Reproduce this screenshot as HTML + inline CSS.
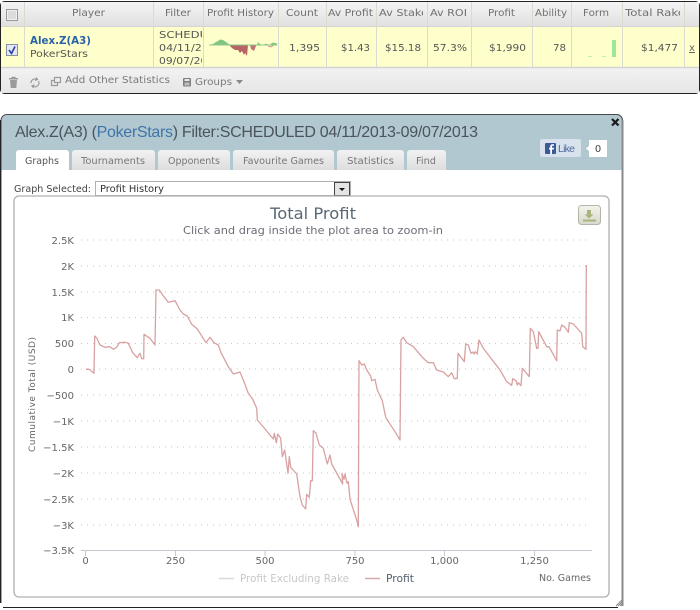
<!DOCTYPE html>
<html>
<head>
<meta charset="utf-8">
<title>Alex.Z(A3)</title>
<style>
html,body{margin:0;padding:0;background:#fff;width:700px;height:610px;overflow:hidden}
svg{display:block;filter:blur(0.35px)}
text{font-family:"DejaVu Sans","Liberation Sans",sans-serif;white-space:pre}
.h{font-size:10px;fill:#707070}
.v{font-size:10px;fill:#555}
.tab{font-size:10px;fill:#777}
.y{font-size:10px;fill:#666;text-anchor:end}
.x{font-size:10px;fill:#666;text-anchor:middle}
.g{stroke:#c4c4c4;stroke-width:1;stroke-dasharray:1 5}
</style>
</head>
<body>
<svg width="700" height="610" viewBox="0 0 700 610" xmlns="http://www.w3.org/2000/svg">
<defs>
<linearGradient id="hd" x1="0" y1="0" x2="0" y2="1"><stop offset="0" stop-color="#f4f4f4"/><stop offset="1" stop-color="#e0e0e0"/></linearGradient>
<linearGradient id="ft" x1="0" y1="0" x2="0" y2="1"><stop offset="0" stop-color="#f2f2f2"/><stop offset="1" stop-color="#e6e6e6"/></linearGradient>
<linearGradient id="tb" x1="0" y1="0" x2="0" y2="1"><stop offset="0" stop-color="#f2f2f2"/><stop offset="1" stop-color="#dedede"/></linearGradient>
<linearGradient id="dl" x1="0" y1="0" x2="0" y2="1"><stop offset="0" stop-color="#f4f4ee"/><stop offset="1" stop-color="#d8d8cc"/></linearGradient>
<clipPath id="c1"><rect x="155" y="27" width="47" height="40"/></clipPath>
<clipPath id="c2"><rect x="378" y="2" width="45" height="24"/></clipPath>
<clipPath id="c3"><rect x="624" y="2" width="56" height="24"/></clipPath>
</defs>

<!-- top table panel -->
<rect x="0.5" y="1.5" width="699" height="92" rx="4" fill="#efefef" stroke="#222"/>
<rect x="1" y="2" width="698" height="24" fill="url(#hd)"/>
<rect x="1" y="27" width="698" height="40" fill="#ffffcc"/>
<rect x="1" y="68" width="698" height="25" fill="url(#ft)"/>
<line x1="1" y1="26.5" x2="699" y2="26.5" stroke="#d4d4d4"/>
<line x1="1" y1="67.5" x2="699" y2="67.5" stroke="#d4d4d4" stroke-width="1.5"/>
<g stroke="#dadad0" stroke-width="1">
<line x1="24.5" y1="2" x2="24.5" y2="67"/><line x1="153.5" y1="2" x2="153.5" y2="67"/><line x1="203.5" y1="2" x2="203.5" y2="67"/>
<line x1="278.5" y1="2" x2="278.5" y2="67"/><line x1="326.5" y1="2" x2="326.5" y2="67"/><line x1="376.5" y1="2" x2="376.5" y2="67"/>
<line x1="427.5" y1="2" x2="427.5" y2="67"/><line x1="471.5" y1="2" x2="471.5" y2="67"/><line x1="532.5" y1="2" x2="532.5" y2="67"/>
<line x1="571.5" y1="2" x2="571.5" y2="67"/><line x1="622.5" y1="2" x2="622.5" y2="67"/><line x1="684.5" y1="2" x2="684.5" y2="67"/>
</g>
<rect x="6.5" y="9.5" width="11" height="11" fill="#eee" stroke="#999"/>
<rect x="8" y="11" width="8" height="8" fill="#dcdcdc"/>
<rect x="6.5" y="44.5" width="11" height="11" fill="#e6e8f0" stroke="#8390a8"/>
<path d="M9 50 L11.500 53.500 L15 46.500" fill="none" stroke="#2a3fb0" stroke-width="1.600"/>

<text class="h" x="72" y="16" textLength="33" lengthAdjust="spacingAndGlyphs">Player</text>
<text class="h" x="165" y="16" textLength="26" lengthAdjust="spacingAndGlyphs">Filter</text>
<text class="h" x="207" y="16" textLength="67" lengthAdjust="spacingAndGlyphs">Profit History</text>
<text class="h" x="286" y="16" textLength="32" lengthAdjust="spacingAndGlyphs">Count</text>
<text class="h" x="328" y="16" textLength="45" lengthAdjust="spacingAndGlyphs">Av Profit</text>
<g clip-path="url(#c2)"><text class="h" x="379" y="16" textLength="49" lengthAdjust="spacingAndGlyphs">Av Stake</text></g>
<text class="h" x="430" y="16" textLength="37" lengthAdjust="spacingAndGlyphs">Av ROI</text>
<text class="h" x="488" y="16" textLength="27" lengthAdjust="spacingAndGlyphs">Profit</text>
<text class="h" x="535" y="16" textLength="32" lengthAdjust="spacingAndGlyphs">Ability</text>
<text class="h" x="583" y="16" textLength="26" lengthAdjust="spacingAndGlyphs">Form</text>
<g clip-path="url(#c3)"><text class="h" x="625" y="16" textLength="60" lengthAdjust="spacingAndGlyphs">Total Rake</text></g>

<text x="30" y="44" font-size="10.5px" font-weight="bold" fill="#2a62a8" textLength="61" lengthAdjust="spacingAndGlyphs">Alex.Z(A3)</text>
<text class="v" x="30" y="57" textLength="58" lengthAdjust="spacingAndGlyphs">PokerStars</text>
<g clip-path="url(#c1)">
<text class="v" x="159" y="38" textLength="72" lengthAdjust="spacingAndGlyphs">SCHEDULED</text>
<text class="v" x="159" y="51" textLength="68" lengthAdjust="spacingAndGlyphs">04/11/2013-</text>
<text class="v" x="159" y="64" textLength="62" lengthAdjust="spacingAndGlyphs">09/07/2013</text>
</g>
<!-- sparkline -->
<polygon points="209,45 213,44 216,42 218,41 220,39.500 223,40 226,42 230,45" fill="#7fc77f"/>
<polygon points="229,45 232,48 235,50 238,50 240,53 242,51 244,55 245,53 247,56 248,45" fill="#b86464"/>
<polygon points="250,45 251,49 254,51 256,46 257,45" fill="#c27272"/>
<polygon points="257,45 258,42 260,44 263,45 266,43.500 269,45 273,42.500 277,43.500 277,45" fill="#7fc77f"/>
<line x1="209" y1="45" x2="277" y2="45" stroke="#8cc78c" stroke-width="1"/>
<path d="M268 46 L271 47 L273 45.500" stroke="#d09090" fill="none"/>

<text class="v" x="320" y="51" text-anchor="end" textLength="31" lengthAdjust="spacingAndGlyphs">1,395</text>
<text class="v" x="370" y="51" text-anchor="end" textLength="29" lengthAdjust="spacingAndGlyphs">$1.43</text>
<text class="v" x="421" y="51" text-anchor="end" textLength="36" lengthAdjust="spacingAndGlyphs">$15.18</text>
<text class="v" x="467" y="51" text-anchor="end" textLength="34" lengthAdjust="spacingAndGlyphs">57.3%</text>
<text class="v" x="526" y="51" text-anchor="end" textLength="37" lengthAdjust="spacingAndGlyphs">$1,990</text>
<text class="v" x="566" y="51" text-anchor="end" textLength="13" lengthAdjust="spacingAndGlyphs">78</text>
<text class="v" x="678" y="51" text-anchor="end" textLength="37" lengthAdjust="spacingAndGlyphs">$1,477</text>
<rect x="612" y="40" width="4" height="17" fill="#9be89b"/>
<rect x="588" y="56" width="4" height="1" fill="#bfeebf"/>
<rect x="602" y="56" width="4" height="1" fill="#bfeebf"/>
<text x="692" y="51" font-size="10px" fill="#666" text-anchor="middle" text-decoration="underline">x</text>

<!-- footer icons -->
<g fill="#9a9a9a">
<rect x="9" y="78" width="9" height="1.500"/><rect x="11.500" y="76.800" width="4" height="1.500"/>
<path d="M10 80 H17 L16.300 88 H10.700 Z"/>
</g>
<g fill="none" stroke="#9a9a9a" stroke-width="1.200">
<path d="M31 83 A4 4 0 0 1 37 79.500"/><path d="M38.500 81 A4 4 0 0 1 32.500 86"/>
<path d="M36 77.500 L37.500 79.500 L35 80.500"/><path d="M33.500 87.800 L32 85.800 L34.500 85"/>
<rect x="54.500" y="77.500" width="6" height="5"/><path d="M54 80.500 H51.500 V85.500 H57.500 V83"/>
</g>
<text x="65" y="83" font-size="10px" fill="#7a7a7a" textLength="105" lengthAdjust="spacingAndGlyphs">Add Other Statistics</text>
<rect x="183" y="78" width="8" height="8.500" rx="1" fill="#7f7f7f"/>
<rect x="184.500" y="79" width="5" height="2" fill="#e8e8e8"/><rect x="184.500" y="82.500" width="5" height="3" fill="#bdbdbd"/>
<text x="195" y="85" font-size="10px" fill="#7a7a7a" textLength="37" lengthAdjust="spacingAndGlyphs">Groups</text>
<path d="M236 80 H243 L239.500 84 Z" fill="#888"/>

<!-- dialog -->
<rect x="1" y="114" width="622" height="493" rx="6" fill="#fff"/>
<path d="M7 114 H617 A6 6 0 0 1 623 120 V170 H1 V120 A6 6 0 0 1 7 114 Z" fill="#b2c8d1"/>
<path d="M622.500 120 V606" stroke="#8a8a8a" stroke-width="2" fill="none"/>
<path d="M622.500 120 A6 6 0 0 0 616.500 114.500 H7 A6 6 0 0 0 1 120.500 V603" stroke="#4a4a4a" stroke-width="1" fill="none"/>
<path d="M0.500 120 V603" stroke="#222" stroke-width="1" fill="none"/>
<path d="M3 607.500 H618" stroke="#222" stroke-width="1" fill="none"/>
<g stroke="#888" stroke-width="1"><line x1="616" y1="606" x2="622" y2="600"/><line x1="618" y1="606" x2="622" y2="602"/><line x1="620" y1="606" x2="622" y2="604"/></g>

<text x="15" y="137" font-size="16px" fill="#4a545a" style="font-family:'Liberation Sans',sans-serif" textLength="463"><tspan>Alex.Z(A3) (</tspan><tspan fill="#3f74a8">PokerStars</tspan><tspan>) Filter:SCHEDULED 04/11/2013-09/07/2013</tspan></text>
<path d="M612 119 L618.500 125.500 M618.500 119 L612 125.500" stroke="#1a1a1a" stroke-width="2.200"/>

<!-- tabs -->
<path d="M16 170 V153 A3 3 0 0 1 19 150 H66 A3 3 0 0 1 69 153 V170 Z" fill="#fff"/>
<path d="M72 170 V153 A3 3 0 0 1 75 150 H152 A3 3 0 0 1 155 153 V170 Z" fill="url(#tb)"/>
<path d="M158 170 V153 A3 3 0 0 1 161 150 H227 A3 3 0 0 1 230 153 V170 Z" fill="url(#tb)"/>
<path d="M233 170 V153 A3 3 0 0 1 236 150 H331 A3 3 0 0 1 334 153 V170 Z" fill="url(#tb)"/>
<path d="M337 170 V153 A3 3 0 0 1 340 150 H401 A3 3 0 0 1 404 153 V170 Z" fill="url(#tb)"/>
<path d="M407 170 V153 A3 3 0 0 1 410 150 H443 A3 3 0 0 1 446 153 V170 Z" fill="url(#tb)"/>
<text class="tab" x="25" y="164" textLength="34" lengthAdjust="spacingAndGlyphs" style="fill:#555">Graphs</text>
<text class="tab" x="81" y="164" textLength="64" lengthAdjust="spacingAndGlyphs">Tournaments</text>
<text class="tab" x="168" y="164" textLength="52" lengthAdjust="spacingAndGlyphs">Opponents</text>
<text class="tab" x="243" y="164" textLength="81" lengthAdjust="spacingAndGlyphs">Favourite Games</text>
<text class="tab" x="347" y="164" textLength="47" lengthAdjust="spacingAndGlyphs">Statistics</text>
<text class="tab" x="416" y="164" textLength="20" lengthAdjust="spacingAndGlyphs">Find</text>

<!-- like -->
<rect x="540" y="139" width="41" height="18" rx="2" fill="#d8e2ec"/>
<rect x="545" y="143" width="11" height="11" rx="1" fill="#3b5998"/>
<path d="M552 154 V149.500 H553.800 L554 147.700 H552 V146.700 C552 146 552.400 145.800 553 145.800 H554 V144.300 H552.500 C551 144.300 550.200 145.200 550.200 146.500 V147.700 H549 V149.500 H550.200 V154 Z" fill="#fff"/>
<text x="558" y="152" font-size="10.5px" fill="#4f6a9e" style="font-family:'Liberation Sans',sans-serif" textLength="17">Like</text>
<rect x="589" y="140" width="18" height="17" fill="#fff"/>
<path d="M589 146 L586 148.500 L589 151 Z" fill="#fff"/>
<text x="598" y="152" font-size="10px" fill="#444" text-anchor="middle">0</text>

<!-- select -->
<text x="14" y="192" font-size="10px" fill="#444" textLength="77" lengthAdjust="spacingAndGlyphs">Graph Selected:</text>
<rect x="95.500" y="181.500" width="255" height="14" fill="#fff" stroke="#b0b0b0"/>
<text x="100" y="192" font-size="10px" fill="#333" textLength="64" lengthAdjust="spacingAndGlyphs">Profit History</text>
<rect x="334.500" y="182.500" width="15" height="13" fill="#e4e4e4" stroke="#444"/>
<path d="M339 188 H345 L342 191 Z" fill="#111"/>

<!-- chart box -->
<rect x="14" y="196" width="595" height="401" rx="5" fill="#fff" stroke="#b0b0b0" stroke-width="1.300"/>
<text x="313" y="219" font-size="16px" fill="#5a6875" text-anchor="middle" textLength="86" lengthAdjust="spacingAndGlyphs">Total Profit</text>
<text x="183" y="234" font-size="10.5px" fill="#6c6f78" textLength="260" lengthAdjust="spacingAndGlyphs">Click and drag inside the plot area to zoom-in</text>

<rect x="578.500" y="205.500" width="22" height="19" rx="3" fill="url(#dl)" stroke="#b4b4a8"/>
<path d="M587 210 H591 V214.500 H593.500 L589 218.500 L584.500 214.500 H587 Z" fill="#a9b57c"/>
<rect x="583" y="219.500" width="13" height="2" fill="#a9b57c"/>

<!-- grid -->
<g class="g">
<line x1="81" y1="240" x2="591" y2="240"/><line x1="81" y1="266" x2="591" y2="266"/><line x1="81" y1="292" x2="591" y2="292"/>
<line x1="81" y1="317.500" x2="591" y2="317.500"/><line x1="81" y1="343.500" x2="591" y2="343.500"/><line x1="81" y1="369" x2="591" y2="369"/>
<line x1="81" y1="395" x2="591" y2="395"/><line x1="81" y1="421" x2="591" y2="421"/><line x1="81" y1="447" x2="591" y2="447"/>
<line x1="81" y1="473" x2="591" y2="473"/><line x1="81" y1="499" x2="591" y2="499"/><line x1="81" y1="525" x2="591" y2="525"/>
</g>
<line x1="81" y1="550.500" x2="592" y2="550.500" stroke="#c8c8d0" stroke-width="1"/>
<g stroke="#c8c8d0"><line x1="85.500" y1="551" x2="85.500" y2="556"/><line x1="175.500" y1="551" x2="175.500" y2="556"/><line x1="265" y1="551" x2="265" y2="556"/><line x1="355" y1="551" x2="355" y2="556"/><line x1="444.500" y1="551" x2="444.500" y2="556"/><line x1="534.500" y1="551" x2="534.500" y2="556"/></g>

<text class="y" x="74" y="244">2.5K</text><text class="y" x="74" y="270">2K</text><text class="y" x="74" y="296">1.5K</text>
<text class="y" x="74" y="321">1K</text><text class="y" x="74" y="347">500</text><text class="y" x="74" y="373">0</text>
<text class="y" x="74" y="399">−500</text><text class="y" x="74" y="425">−1K</text><text class="y" x="74" y="451">−1.5K</text>
<text class="y" x="74" y="477">−2K</text><text class="y" x="74" y="503">−2.5K</text><text class="y" x="74" y="529">−3K</text><text class="y" x="74" y="554">−3.5K</text>

<text class="x" x="85.500" y="564">0</text><text class="x" x="175.500" y="564">250</text><text class="x" x="265" y="564">500</text>
<text class="x" x="355" y="564">750</text><text class="x" x="444.500" y="564">1,000</text><text class="x" x="534.500" y="564">1,250</text>

<text x="0" y="0" font-size="9px" fill="#666" text-anchor="middle" textLength="115" transform="translate(35,394.500) rotate(-90)">Cumulative Total (USD)</text>

<!-- curve -->
<polyline fill="none" stroke="#cf8a8a" stroke-opacity="0.8" stroke-width="1.300" stroke-linejoin="round" points="86,369.300 89.300,369.300 94,373.300 94.700,336 96.700,338 100,345 105,347.300 110,346.700 113.300,349.300 116.700,347.300 119.300,342.700 125,342.300 128.300,343.300 132.700,352.700 137.300,357.700 140,353.300 141.700,358.700 143.700,358.700 144,334.300 150,338.300 155,345 156,290 159.300,290 162.700,295 168.300,302.300 175,300.700 180,310 183.300,314 187.300,316 191.700,324.300 197.300,329 206,342.700 210,337.300 214,342.700 218.300,345 221,352.700 228.300,366.700 233.300,374 240,372 244,381.700 248.300,393.300 252.700,399.300 256.700,408.300 257.300,420 261.700,425 273.300,439 274.300,433.300 276.300,442.700 277.700,434 280.700,438.300 282.300,456.700 284.700,450 288,473.300 289.300,456.700 290.700,467.300 296.700,474 300,496.700 302.300,505 305.700,509 306.700,494.300 309.300,497.300 310.700,480.700 312.300,480.700 313.300,430.700 315.700,432.700 319.300,445 323.300,448.300 327.300,464 330,455 331.700,464 342.700,484 342,473.300 344,479.300 345,474 347,483.300 348.300,481.700 350,499.300 356.700,520 358.300,526.700 359,360.700 361.700,365 364.300,364 366.700,370 370.700,376 371.700,380.700 375,379.300 377.300,390 382.300,400.700 385.700,417.300 396,433.300 400,440 401,340 403.300,337.300 406.700,342.700 413.300,346.700 423.300,358.300 428.300,362.700 433.300,362.700 436.700,370 443.300,372 448.300,376.700 451.700,372.700 454.300,378.700 457.300,378.300 458,353.300 464.300,361.700 465.700,344 468.300,345 471,353.300 472.700,352 474,354 475.300,351.700 477.300,354 479,340 483.300,348.300 500,370 506.700,381.700 511.700,385.300 512.700,378.700 516,380.700 517.300,385 518.300,382.700 521,385.700 522.300,368.300 529.300,376.700 530.300,328.300 533.300,331.700 536.700,348.300 538,348.300 538.700,331.700 546.700,346.700 549,346.700 556.700,360.700 557.300,330 560,331 561.700,325 565,327.300 568.300,332.300 569.300,322.700 573.300,324 581.700,333.300 582.700,346.700 586,349.300 586.300,265"/>

<!-- legend -->
<line x1="219" y1="578.500" x2="234" y2="578.500" stroke="#d8d8d8" stroke-width="1.500"/>
<text x="240" y="582" font-size="10.5px" fill="#c8c8c8" textLength="109" lengthAdjust="spacingAndGlyphs">Profit Excluding Rake</text>
<line x1="365" y1="578.500" x2="380" y2="578.500" stroke="#d8a8a8" stroke-width="1.500"/>
<text x="386" y="582" font-size="10.5px" fill="#55606e" textLength="28" lengthAdjust="spacingAndGlyphs">Profit</text>
<text x="539" y="581" font-size="9.5px" fill="#666" textLength="52" lengthAdjust="spacingAndGlyphs">No. Games</text>
</svg>
</body>
</html>
